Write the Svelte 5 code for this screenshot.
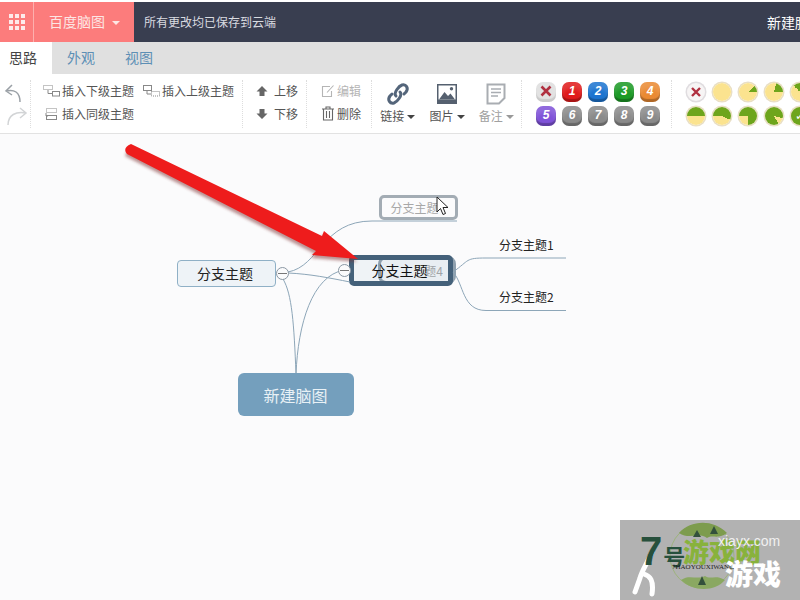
<script lang="ts">
  const priorities = [
    { label: '1', color: '#e01b1b' },
    { label: '2', color: '#1c74d0' },
    { label: '3', color: '#1c9a26' },
    { label: '4', color: '#ea8a33' },
    { label: '5', color: '#7f52d8' },
    { label: '6', color: '#8a8a8a' },
    { label: '7', color: '#8a8a8a' },
    { label: '8', color: '#8a8a8a' },
    { label: '9', color: '#8a8a8a' },
  ];
  // green wedge of each progress pie, degrees clockwise from the top
  const progress = [
    { from: 0, to: 0 },
    { from: 45, to: 90 },
    { from: 15, to: 90 },
    { from: -45, to: 90 },
    { from: -90, to: 90 },
    { from: -90, to: 115 },
    { from: -90, to: 180 },
    { from: 150, to: 465 },
  ];
</script>

<div class="page">
  <header class="topbar">
    <div class="grid-btn">
      <span class="dots">
        {#each Array(9) as _}<i></i>{/each}
      </span>
    </div>
    <div class="brand">百度脑图<span class="caret"></span></div>
    <div class="saved">所有更改均已保存到云端</div>
    <div class="title">新建脑图</div>
  </header>

  <nav class="tabs">
    <span class="tab active">思路</span>
    <span class="tab">外观</span>
    <span class="tab">视图</span>
  </nav>

  <section class="toolbar">
    <div class="group undo">
      <svg width="31" height="50" viewBox="0 0 31 50" fill="none" stroke-width="1.5">
        <path d="M12 5 L6 11 L12 15 M6 11 C14 9 20 12 20 22" stroke="#9aa0a6" />
        <path d="M20 28 L26 33 L20 38 M26 33 C16 31 8 35 8 45" stroke="#d2d4d6" />
      </svg>
    </div>

    <div class="group insert">
      <div class="row">
        <span class="item">
          <svg width="18" height="12" viewBox="0 0 18 12" fill="none" stroke="#888" stroke-width="1">
            <rect x="0.5" y="0.5" width="9" height="4" stroke-dasharray="1 1" />
            <path d="M5 5 V8.5 H9" /><rect x="9.5" y="6.5" width="7" height="4.5" />
          </svg>
          插入下级主题
        </span>
        <span class="item">
          <svg width="18" height="12" viewBox="0 0 18 12" fill="none" stroke="#888" stroke-width="1">
            <rect x="0.5" y="0.5" width="8" height="5" />
            <path d="M4 6 V9 H8" /><rect x="8.5" y="6.5" width="8" height="4.5" stroke-dasharray="1 1" />
          </svg>
          插入上级主题
        </span>
      </div>
      <div class="row">
        <span class="item">
          <svg width="18" height="12" viewBox="0 0 18 12" fill="none" stroke="#888" stroke-width="1">
            <rect x="3.5" y="0.5" width="10" height="4" stroke-dasharray="1 1" />
            <path d="M3 5 V8 H5" /><rect x="3.5" y="7.5" width="10" height="4" />
          </svg>
          插入同级主题
        </span>
      </div>
    </div>

    <div class="group move">
      <span class="item">
        <svg width="12" height="12" viewBox="0 0 12 12" fill="#666"><path d="M6 1 L11.5 6.5 H8.5 V11 H3.5 V6.5 H0.5 Z" /></svg>
        上移
      </span>
      <span class="item">
        <svg width="12" height="12" viewBox="0 0 12 12" fill="#666"><path d="M6 11 L11.5 5.5 H8.5 V1 H3.5 V5.5 H0.5 Z" /></svg>
        下移
      </span>
    </div>

    <div class="group edit">
      <span class="item muted">
        <svg width="14" height="14" viewBox="0 0 14 14" fill="none" stroke="#b5b5b5" stroke-width="1.1">
          <path d="M9 2.5 H1.5 V12.5 H10.5 V7 M6 8.5 L12.5 1.5" />
        </svg>
        编辑
      </span>
      <span class="item">
        <svg width="14" height="15" viewBox="0 0 14 15" fill="none" stroke="#666" stroke-width="1.1">
          <path d="M1 3 H13 M5 3 V1 H9 V3 M2.5 3 V14 H11.5 V3 M5.5 5 V12 M8.5 5 V12" />
        </svg>
        删除
      </span>
    </div>

    <div class="group big">
      <div class="tool">
        <svg width="26" height="26" viewBox="0 0 26 26" fill="none" stroke="#54657a" stroke-width="3" stroke-linecap="round">
          <path d="M11 15 C8 12 14 5 17 4 C21 3 24 7 21 11 L19 13" />
          <path d="M15 11 C18 14 12 21 9 22 C5 23 2 19 5 15 L7 13" />
        </svg>
        <span class="tool-label">链接<span class="drop"></span></span>
      </div>
      <div class="tool">
        <svg width="22" height="26" viewBox="0 0 22 26">
          <rect x="1" y="3" width="20" height="20" fill="#55606f" />
          <rect x="2.5" y="4.5" width="17" height="14" fill="#fff" />
          <path d="M3 18.5 L8.5 11 L12 15 L14.5 12.5 L19 18.5 Z" fill="#55606f" />
          <circle cx="15.5" cy="7.8" r="1.7" fill="#55606f" />
        </svg>
        <span class="tool-label">图片<span class="drop"></span></span>
      </div>
      <div class="tool">
        <svg width="20" height="26" viewBox="0 0 20 26" fill="none" stroke="#a9adb2">
          <path d="M1.5 3.5 H18.5 V17 L13 22.5 H1.5 Z" stroke-width="2" />
          <path d="M5 8 H15 M5 11.5 H15 M5 15 H12" stroke-width="1.4" />
        </svg>
        <span class="tool-label faded">备注<span class="drop light"></span></span>
      </div>
    </div>

    <div class="group priority">
      <span class="chip clear">
        <svg width="12" height="12" viewBox="0 0 12 12" stroke="#b03040" stroke-width="2.6"><path d="M1.5 1.5 L10.5 10.5 M10.5 1.5 L1.5 10.5" /></svg>
      </span>
      {#each priorities as p}
        <span class="chip" style:--chip={p.color}>{p.label}</span>
      {/each}
    </div>

    <div class="group progress">
      <span class="pie none">
        <svg width="10" height="10" viewBox="0 0 10 10" stroke="#b03040" stroke-width="2.4"><path d="M1 1 L9 9 M9 1 L1 9" /></svg>
      </span>
      {#each progress as p}
        <span class="pie" style:--from="{p.from}deg" style:--size="{p.to - p.from}deg"></span>
      {/each}
      <span class="pie done">✓</span>
    </div>
  </section>

  <main class="canvas">
    <svg class="links" width="800" height="466" viewBox="0 0 800 466" fill="none">
      <g stroke="#8da6b8" stroke-width="1">
        <path d="M296 240 C294 190 292 160 283 145" />
        <path d="M296 240 C298 190 312 142 344 136" />
        <path d="M288 139 C310 140 330 144 350 148" />
        <path d="M288 138 C320 132 322 87 372 87 H457" />
        <path d="M453 138 C470 126 465 124 486 124 H566" />
        <path d="M453 138 C464 150 462 176.5 486 176.5 H566" />
      </g>
      <defs>
        <filter id="arrow-shadow" x="-10%" y="-10%" width="120%" height="130%">
          <feGaussianBlur stdDeviation="1.8" />
        </filter>
      </defs>
      <path d="M130 10 L322 102 L324 97 L358 125 L312 121 L316 117 L126 19 Z" fill="#7a2a2a" opacity="0.5" filter="url(#arrow-shadow)" transform="translate(-1 3)" />
      <path d="M131 10 L322 102 L324 97 L358 125 L312 121 L316 117 L127 20 Q122 14 131 10 Z" fill="#ee1c1c" />
    </svg>

    <div class="node side">分支主题</div>
    <span class="toggle t1"></span>
    <span class="toggle t2"></span>
    <div class="node ghost-top">分支主题</div>
    <div class="node ghost-mid">题4</div>
    <div class="node selected">分支主题</div>
    <div class="leaf l1">分支主题1</div>
    <div class="leaf l2">分支主题2</div>
    <div class="node root">新建脑图</div>

    <svg class="cursor" width="14" height="22" viewBox="0 0 14 22">
      <path d="M1 1 V16 L4.5 12.5 L7 18.5 L9.5 17.5 L7 11.5 H12 Z" fill="#fff" stroke="#222" stroke-width="1" />
    </svg>

    <div class="mark-pale"></div>
    <div class="mark">
      <svg class="globe" width="70" height="72" viewBox="0 0 70 72" fill="none">
        <circle cx="35" cy="36" r="32" stroke="#9db27c" stroke-width="1" />
        <path d="M12 13 C24 0 46 -1 60 13 C50 20 46 14 40 18 C32 12 22 20 12 13 Z" fill="#7d9c4e" />
        <path d="M30 10 L34 17 L26 17 Z M47 6 L51 14 L43 14 Z" fill="#33503c" />
        <path d="M14 60 C26 72 48 72 58 60 C48 54 44 60 38 56 C30 60 22 54 14 60 Z" fill="#8aa862" />
        <path d="M35 56 L39 65 L31 65 Z" fill="#33503c" />
      </svg>
      <svg class="runner" width="40" height="50" viewBox="0 0 40 50" fill="none" stroke="#fff" stroke-width="5" stroke-linecap="round">
        <path d="M20 4 C16 14 10 22 8 30 L3 44 M12 26 C18 28 22 32 20 46" />
      </svg>
      <span class="seven">7<small>号</small></span>
      <span class="cn-green">游戏网</span>
      <span class="url">xiayx.com</span>
      <span class="pinyin">7HAOYOUXIWANG</span>
      <span class="cn-white">游戏</span>
    </div>
  </main>
</div>

<style>
  :global(body) {
    margin: 0;
    background: #fff;
  }

  .page {
    width: 800px;
    height: 600px;
    overflow: hidden;
    display: flex;
    flex-direction: column;
    padding-top: 2px;
    box-sizing: border-box;
    font-family: "Noto Sans CJK SC", "Liberation Sans", sans-serif;
    font-size: 12px;
    color: #555;
  }

  .topbar {
    flex: 0 0 40px;
    display: flex;
    align-items: center;
    background: #393e50;
    color: #d9dbe0;
  }

  .grid-btn {
    width: 33px;
    height: 40px;
    background: #fc7c7c;
    border-right: 1px solid #fdb0ae;
    display: flex;
    align-items: center;
    justify-content: center;
  }

  .dots {
    display: grid;
    grid-template-columns: repeat(3, 4px);
    gap: 2px;
  }

  .dots i {
    width: 4px;
    height: 4px;
    background: #fdeaea;
  }

  .brand {
    width: 100px;
    height: 40px;
    background: #fc7c7c;
    color: #fde6e4;
    font-size: 14px;
    line-height: 39px;
    padding-left: 15px;
    box-sizing: border-box;
  }

  .caret {
    display: inline-block;
    margin-left: 7px;
    vertical-align: 2px;
    border: 4px solid transparent;
    border-top-color: #fde6e4;
    border-bottom: 0;
  }

  .saved {
    margin-left: 10px;
    flex: 1;
    padding-bottom: 1px;
  }

  .title {
    color: #fff;
    font-size: 14px;
    width: 33px;
    white-space: nowrap;
    padding-bottom: 1px;
  }

  .tabs {
    flex: 0 0 32px;
    display: flex;
    background: #e0e0e0;
  }

  .tab {
    width: 58px;
    line-height: 31px;
    text-align: center;
    font-size: 14px;
    color: #5d8fb5;
  }

  .tab.active {
    width: 52px;
    padding-right: 6px;
    box-sizing: border-box;
    background: #fff;
    color: #444;
  }

  .toolbar {
    flex: 0 0 60px;
    display: flex;
    align-items: flex-start;
    padding-top: 6px;
    box-sizing: border-box;
    background: #fff;
    border-bottom: 1px solid #e2e2e2;
  }

  .group {
    height: 48px;
    box-sizing: border-box;
    border-right: 1px dotted #ddd;
    flex: none;
  }

  .undo {
    width: 31px;
  }

  .undo svg {
    display: block;
  }

  .insert {
    width: 212px;
    padding: 1px 0 0 12px;
    display: flex;
    flex-direction: column;
    gap: 4px;
  }

  .row {
    display: flex;
    gap: 9px;
    height: 19px;
  }

  .item {
    display: flex;
    align-items: center;
    gap: 1px;
    white-space: nowrap;
    line-height: 19px;
  }

  .move {
    width: 64px;
    padding: 1px 0 0 13px;
    display: flex;
    flex-direction: column;
    gap: 4px;
  }

  .move .item {
    height: 19px;
    gap: 6px;
  }

  .edit {
    width: 65px;
    padding: 1px 0 0 14px;
    display: flex;
    flex-direction: column;
    gap: 4px;
  }

  .edit .item {
    height: 19px;
    gap: 2px;
  }

  .muted {
    color: #b5b5b5;
  }

  .big {
    width: 150px;
    display: flex;
    padding: 1px 0 0 1px;
  }

  .tool {
    width: 50px;
    display: flex;
    flex-direction: column;
    align-items: center;
  }

  .tool-label {
    white-space: nowrap;
    line-height: 17px;
  }

  .faded {
    color: #a0a0a0;
  }

  .drop {
    display: inline-block;
    margin-left: 3px;
    vertical-align: 2px;
    border: 4px solid transparent;
    border-top-color: #444;
    border-bottom: 0;
  }

  .drop.light {
    border-top-color: #999;
  }

  .priority {
    width: 150px;
    display: grid;
    grid-template-columns: repeat(5, 20px);
    grid-auto-rows: 20px;
    column-gap: 6px;
    row-gap: 4px;
    padding: 2px 0 0 14px;
  }

  .chip {
    width: 20px;
    height: 20px;
    border-radius: 7px;
    background: var(--chip);
    box-shadow: inset 0 -3px 1px rgba(0, 0, 0, 0.25), inset 0 7px 4px rgba(255, 255, 255, 0.14);
    color: #fff;
    display: flex;
    align-items: center;
    justify-content: center;
    font: italic bold 12px "Liberation Sans", sans-serif;
    padding-bottom: 2px;
    box-sizing: border-box;
  }

  .chip.clear {
    background: #e2e2e2;
    box-shadow: inset 0 -3px 1px rgba(0, 0, 0, 0.1);
  }

  .progress {
    border-right: 0;
    width: 140px;
    display: grid;
    grid-template-columns: repeat(5, 18px);
    grid-auto-rows: 18px;
    column-gap: 8px;
    row-gap: 6px;
    padding: 3px 0 0 15px;
  }

  .pie {
    width: 18px;
    height: 18px;
    border-radius: 50%;
    background: conic-gradient(from var(--from, 0deg), #6ea51c 0 var(--size, 0deg), #fbe38f var(--size, 0deg) 360deg);
    box-shadow: 0 0 0 1.5px #e9dfc4;
    box-sizing: border-box;
    display: flex;
    align-items: center;
    justify-content: center;
  }

  .pie.none {
    background: #f7f5f5;
    box-shadow: 0 0 0 1.5px #e0dde0;
  }

  .pie.done {
    background: #6ea51c;
    color: #fff;
    font: bold 12px "DejaVu Sans", sans-serif;
  }

  .canvas {
    flex: 1;
    position: relative;
    background: #fbfbfc;
  }

  .links {
    position: absolute;
    inset: 0;
    z-index: 3;
    pointer-events: none;
  }

  .node {
    position: absolute;
    box-sizing: border-box;
    display: flex;
    align-items: center;
    justify-content: center;
    white-space: nowrap;
    color: #222;
    font-size: 14px;
  }

  .side {
    left: 177px;
    top: 126px;
    width: 99px;
    height: 27px;
    padding: 0 3px 2px 0;
    background: #eef3f7;
    border: 1px solid #8fb0c6;
    border-radius: 4px;
  }

  .ghost-top {
    left: 379px;
    top: 61px;
    width: 79px;
    height: 25px;
    border: 3px solid #a3acb4;
    border-radius: 5px;
    background: #fbfbfc;
    color: #a8a8a8;
    font-size: 12px;
    padding-right: 8px;
  }

  .ghost-mid {
    left: 378px;
    top: 122px;
    width: 78px;
    height: 28px;
    border: 3px solid #8fa0ae;
    border-radius: 8px;
    background: #e9eef2;
    color: #a0a5a8;
    justify-content: flex-end;
    padding-right: 10px;
    font-size: 12px;
    z-index: 1;
  }

  .selected {
    left: 349px;
    top: 121px;
    width: 104px;
    height: 31px;
    border: 5px solid #44617a;
    border-radius: 5px;
    background: transparent;
    color: #111;
    z-index: 2;
    padding: 0 3px 2px 0;
  }

  .selected::before {
    content: "";
    position: absolute;
    left: 0;
    top: 0;
    bottom: 0;
    width: 24px;
    background: #eff3f6;
    z-index: -1;
  }

  .leaf {
    position: absolute;
    font-size: 12px;
    color: #222;
    white-space: nowrap;
    line-height: 17px;
  }

  .l1 {
    left: 499px;
    top: 102px;
  }

  .l2 {
    left: 499px;
    top: 154px;
  }

  .root {
    left: 238px;
    top: 239px;
    width: 116px;
    height: 43px;
    padding-right: 1px;
    background: #749fbd;
    border-radius: 6px;
    color: #e9f1f6;
    font-size: 16px;
    z-index: 4;
  }

  .toggle {
    position: absolute;
    width: 13px;
    height: 13px;
    box-sizing: border-box;
    border: 1px solid #8a97a3;
    border-radius: 50%;
    background: #fbfbfc;
    z-index: 4;
  }

  .toggle::after {
    content: "";
    position: absolute;
    left: 1px;
    right: 1px;
    top: 5px;
    height: 1px;
    background: #777;
  }

  .t1 {
    left: 276px;
    top: 133px;
  }

  .t2 {
    left: 338px;
    top: 130px;
  }

  .cursor {
    position: absolute;
    left: 436px;
    top: 62px;
    z-index: 5;
  }

  .mark-pale {
    position: absolute;
    left: 600px;
    top: 366px;
    width: 200px;
    height: 100px;
    background: #fff;
  }

  .mark {
    position: absolute;
    left: 620px;
    top: 386px;
    width: 180px;
    height: 80px;
    background: #b2b2b2;
    overflow: hidden;
    font-family: "Noto Sans CJK SC", sans-serif;
  }

  .globe {
    position: absolute;
    left: 47px;
    top: 0;
  }

  .runner {
    position: absolute;
    left: 12px;
    top: 28px;
  }

  .seven {
    position: absolute;
    left: 20px;
    top: 8px;
    font: 700 40px/46px "Liberation Sans", sans-serif;
    color: #27503c;
    white-space: nowrap;
  }

  .seven small {
    font: 700 22px/46px "Noto Sans CJK SC", sans-serif;
    margin-left: 1px;
  }

  .cn-green {
    position: absolute;
    left: 63px;
    top: 13px;
    font-size: 26px;
    font-weight: 900;
    line-height: 36px;
    color: #88b23c;
    white-space: nowrap;
  }

  .url {
    position: absolute;
    left: 98px;
    top: 13px;
    font: 14px "Liberation Sans", sans-serif;
    color: #f0f0f0;
  }

  .pinyin {
    position: absolute;
    left: 52px;
    top: 43px;
    font: 7px "Liberation Serif", serif;
    color: #222;
    white-space: nowrap;
  }

  .cn-white {
    position: absolute;
    left: 105px;
    top: 31px;
    font-size: 28px;
    font-weight: 900;
    line-height: 44px;
    color: #fff;
    white-space: nowrap;
  }
</style>
